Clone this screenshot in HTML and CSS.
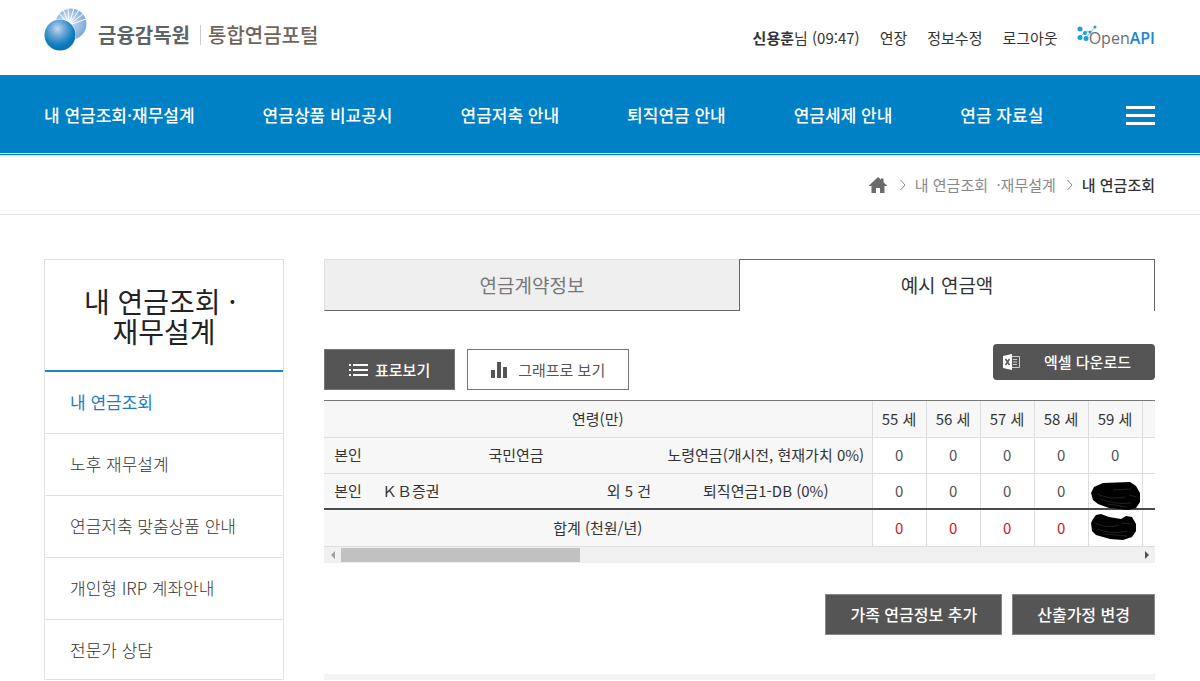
FILE: index.html
```html
<!DOCTYPE html>
<html lang="ko">
<head>
<meta charset="utf-8">
<title>통합연금포털 - 내 연금조회</title>
<meta name="viewport" content="width=device-width, initial-scale=1">
<link rel="stylesheet" href="styles.css">
</head>
<body>
<header class="top wrap">
  <a class="logo" href="#">
    <svg class="logo-mark" width="44" height="44" viewBox="0 0 44 44" aria-hidden="true">
      <defs>
        <radialGradient id="ball" cx="0.42" cy="0.3" r="0.7">
          <stop offset="0" stop-color="#c3d8ee"/><stop offset="0.35" stop-color="#6ba6d4"/><stop offset="0.75" stop-color="#0f7fbe"/><stop offset="1" stop-color="#0a6fae"/>
        </radialGradient>
        <radialGradient id="halo" cx="0.4" cy="0.45" r="0.62">
          <stop offset="0" stop-color="#fff"/><stop offset="0.4" stop-color="#b4cdea"/><stop offset="1" stop-color="#7aa7d8"/>
        </radialGradient>
      </defs>
      <circle cx="27" cy="16" r="15.500" fill="url(#halo)"/>
      <g stroke="#fff" stroke-width="1">
        <path d="M25 17 14 4M25 17 19 1M25 17 24 0M25 17 30 0M25 17 35 2M25 17 39 6M25 17 42 11"/>
      </g>
      <circle cx="16" cy="27" r="16" fill="#fff"/>
      <circle cx="16" cy="27" r="15.500" fill="url(#ball)"/>
    </svg>
    <strong class="logo-org">금융감독원</strong>
    <span class="logo-site">통합연금포털</span>
  </a>
  <ul class="util">
    <li><span><b>신용훈</b>님 (09:47)</span></li>
    <li><a href="#">연장</a></li>
    <li><a href="#">정보수정</a></li>
    <li><a href="#">로그아웃</a></li>
    <li><a class="api" href="#">
      <svg width="20" height="18" viewBox="0 0 20 18" aria-hidden="true">
        <g stroke="#7cc8ea" stroke-width="1"><path d="M3 12 9 6M9 13 18 2M9 6l4 1"/></g>
        <g fill="#1a9fdc"><circle cx="3" cy="4" r="2.500"/><circle cx="3" cy="12.500" r="2.500"/><circle cx="9" cy="13.500" r="2.500"/><circle cx="8" cy="8" r="2"/><circle cx="13" cy="7" r="1.500"/><circle cx="18" cy="2" r="1.500"/></g>
      </svg><span class="api-text">Open<b>API</b></span></a></li>
  </ul>
</header>

<nav class="gnb" aria-label="주 메뉴">
  <div class="wrap gnb-in">
    <a href="#">내 연금조회·재무설계</a>
    <a href="#">연금상품 비교공시</a>
    <a href="#">연금저축 안내</a>
    <a href="#">퇴직연금 안내</a>
    <a href="#">연금세제 안내</a>
    <a href="#">연금 자료실</a>
    <button class="menu" type="button" aria-label="전체메뉴"><i></i><i></i><i></i></button>
  </div>
</nav>

<div class="crumbs">
  <div class="wrap crumbs-in">
    <a href="#" class="home" aria-label="홈">
      <svg width="18" height="16" viewBox="0 0 18 16" aria-hidden="true"><path fill="#6b6b6b" d="M9 0l3 2.800V1.500h2.500v3.700L18 8.500V9h-2.500v7H11v-5H7v5H2.500V9H0v-.500z"/></svg>
    </a>
    <svg class="sep" width="6" height="12" viewBox="0 0 6 12" aria-hidden="true"><path d="M.500 1 5 6 .500 11" fill="none" stroke="#888"/></svg>
    <a href="#">내 연금조회&nbsp; ·재무설계</a>
    <svg class="sep" width="6" height="12" viewBox="0 0 6 12" aria-hidden="true"><path d="M.500 1 5 6 .500 11" fill="none" stroke="#888"/></svg>
    <strong>내 연금조회</strong>
  </div>
</div>

<div class="wrap body">
  <aside class="side">
    <h2>내 연금조회&nbsp;·&nbsp;<br>재무설계</h2>
    <ul>
      <li><a class="on" href="#">내 연금조회</a></li>
      <li><a href="#">노후 재무설계</a></li>
      <li><a href="#">연금저축 맞춤상품 안내</a></li>
      <li><a href="#">개인형 IRP 계좌안내</a></li>
      <li><a href="#">전문가 상담</a></li>
    </ul>
  </aside>

  <main class="main">
    <div class="tabs">
      <a href="#">연금계약정보</a>
      <a class="on" href="#">예시 연금액</a>
    </div>

    <div class="tools">
      <div class="views">
        <button class="btn dark" type="button">
          <svg width="19" height="12" viewBox="0 0 19 12" aria-hidden="true"><path fill="#fff" d="M0 0h2v2H0zM4 0h15v2H4zM0 5h2v2H0zM4 5h15v2H4zM0 10h2v2H0zM4 10h15v2H4z"/></svg>표로보기</button>
        <button class="btn light" type="button">
          <svg width="17" height="16" viewBox="0 0 17 16" aria-hidden="true"><path fill="#555" d="M0 8h4v8H0zM6 0h4v16H6zM12 5h4v11h-4z"/></svg>그래프로 보기</button>
      </div>
      <button class="excel" type="button">
        <svg width="17" height="16" viewBox="0 0 17 16" aria-hidden="true"><path fill="#fff" d="M0 2 9 0v16L0 14z"/><path fill="none" stroke="#ccc" d="M9 2.500h7.500v11H9M10 5.500h4M10 8h4M10 10.500h4"/><path d="M2.500 5 6.500 11M6.500 5 2.500 11" stroke="#555" stroke-width="1.500"/></svg>
        <span>엑셀 다운로드</span></button>
    </div>

    <div class="grid">
      <table>
        <colgroup><col class="c-who"><col class="c-org"><col class="c-cnt"><col class="c-type"><col class="c-age"><col class="c-age"><col class="c-age"><col class="c-age"><col class="c-age"><col class="c-age"></colgroup>
        <thead>
          <tr><th colspan="4" scope="col">연령(만)</th><th scope="col">55 세</th><th scope="col">56 세</th><th scope="col">57 세</th><th scope="col">58 세</th><th scope="col">59 세</th><th></th></tr>
        </thead>
        <tbody>
          <tr><th scope="row">본인</th><th colspan="2">국민연금</th><th>노령연금(개시전, 현재가치 0%)</th><td>0</td><td>0</td><td>0</td><td>0</td><td>0</td><td></td></tr>
          <tr><th scope="row">본인</th><th class="left">ＫＢ증권</th><th>외 5 건</th><th>퇴직연금1-DB (0%)</th><td>0</td><td>0</td><td>0</td><td>0</td>
            <td class="masked"><svg class="ink ink-a" width="50" height="28" viewBox="0 0 50 28" aria-hidden="true"><path d="M12 1 39 0l6 4 4 7v9l-4 6-8 2-19-2-11-4-5-4-2-7 3-6z"/><path d="M6 12q14 6 28 3M10 17q14 6 30 4M22 8l18-1M38 13l8 2M16 22l20 3" fill="none" stroke="#444" stroke-width=".500"/></svg></td><td></td></tr>
        </tbody>
        <tfoot>
          <tr><th colspan="4" scope="row">합계 (천원/년)</th><td>0</td><td>0</td><td>0</td><td>0</td>
            <td class="masked"><svg class="ink ink-b" width="46" height="26" viewBox="0 0 46 26" aria-hidden="true"><path d="m5 1 5-1 8 3 12 2 5-3 6 1 4 7v7l-4 6-9 3-13-1-14-4-4-4-1-8 2-4z"/><path d="M4 9q12 6 24 2M6 15q14 6 30 2M30 9l12 1M14 20l22 2" fill="none" stroke="#444" stroke-width=".500"/></svg></td><td></td></tr>
        </tfoot>
      </table>
    </div>
    <div class="scroll" aria-hidden="true">
      <svg width="17" height="16" viewBox="0 0 17 16"><path fill="#a0a0a0" d="M11 4v8L7 8z"/></svg>
      <div class="track"><div class="thumb"></div></div>
      <svg width="17" height="16" viewBox="0 0 17 16"><path fill="#505050" d="M7 4v8l4-4z"/></svg>
    </div>

    <div class="actions">
      <button type="button">가족 연금정보 추가</button>
      <button type="button">산출가정 변경</button>
    </div>
    <div class="note"></div>
  </main>
</div>
</body>
</html>
```
FILE: styles.css
```css
* { box-sizing: border-box; }
body {
  margin: 0;
  background: #fff;
  color: #333;
  font-family: "Noto Sans CJK KR", "Noto Sans", sans-serif;
  font-size: 15px;
  line-height: 20px;
}
a { color: inherit; text-decoration: none; }
ul { list-style: none; margin: 0; padding: 0; }
button { font: inherit; cursor: pointer; }
svg { display: block; flex: none; }
.wrap { padding: 0 45px 0 44px; }

.top { display: flex; justify-content: space-between; height: 75px; }
.logo { display: flex; align-items: center; padding-bottom: 5px; font-size: 20px; line-height: 20px; }
.logo-mark { margin-bottom: 10px; }
.logo-org { margin-left: 10px; color: #5d6468; }
.logo-site { margin-left: 10px; padding-left: 7px; border-left: 1px solid #ccc; color: #71645d; font-weight: 500; }
.util { display: flex; align-items: center; gap: 20px; padding-top: 1px; }
.util li:last-child { margin-left: -1px; }
.api { display: flex; align-items: center; color: #6d6e71; }
.api svg { margin: 0 -8px 8px 0; }
.api-text { font-family: "Open Sans", sans-serif; font-size: 16px; }
.api-text b { color: #1c86c8; font-weight: 600; }

.gnb { background: #0081c6; border-bottom: 3px double #cfe8f5; }
.gnb-in { display: flex; align-items: center; gap: 68px; height: 78px; padding-top: 2px; color: #fff; font-size: 17px; font-weight: 500; }
.menu { display: flex; flex-direction: column; gap: 5px; width: 29px; margin-left: auto; padding: 0; border: 0; background: none; }
.menu i { height: 3px; background: #fff; }

.crumbs { border-bottom: 1px solid #e5e5e5; }
.crumbs-in { display: flex; justify-content: flex-end; align-items: center; height: 58px; color: #888; }
.crumbs .home { margin-right: 13px; }
.crumbs .sep { margin-right: 9px; }
.crumbs a + .sep:not(:nth-child(2)) { margin-left: 11px; }
.crumbs strong { color: #333; font-weight: 500; }

.body { display: flex; align-items: flex-start; gap: 40px; padding-top: 44px; }
.side { width: 240px; flex: none; border: 1px solid #e1e1e1; }
.side h2 { margin: 0; padding: 26px 0 24px; border-bottom: 2px solid #1c86c0; color: #222; font-size: 28px; line-height: 30px; font-weight: 400; text-align: center; }
.side li + li { border-top: 1px solid #e1e1e1; }
.side li a { display: block; padding: 20px 25px 21px; font-size: 17px; font-weight: 300; }
.side li:last-child a { padding-bottom: 19px; }
.side li a.on { color: #1c7ec0; font-weight: 400; }

.main { flex: 1; min-width: 0; }
.tabs { display: flex; font-size: 19px; }
.tabs a { flex: 1; height: 52px; line-height: 50px; text-align: center; background: #efefef; border: 1px solid #e0e0e0; border-right: 0; border-bottom: 1px solid #666; color: #777; }
.tabs a.on { background: #fff; border: 1px solid #666; border-bottom: 0; color: #333; }

.tools { display: flex; justify-content: space-between; align-items: flex-start; padding: 33px 0 10px; }
.views { display: flex; gap: 12px; padding-top: 5px; }
.btn { display: flex; align-items: center; height: 41px; padding: 0 23px; border: 1px solid #777; }
.btn.dark { gap: 7px; padding: 0 24px; background: #555; color: #fff; font-weight: 500; }
.btn.light { gap: 10px; background: #fff; color: #555; }
.excel { display: flex; align-items: center; justify-content: space-between; width: 162px; height: 36px; padding: 0 24px 0 10px; border: 0; border-radius: 4px; background: #555; color: #fff; font-weight: 500; }

.grid { overflow: hidden; border-top: 1px solid #777; }
table { width: 872px; table-layout: fixed; border-collapse: collapse; }
.c-who { width: 48px; }
.c-org { width: 226px; }
.c-cnt { width: 62px; }
.c-type { width: 212px; }
.c-age { width: 54px; }
th, td { height: 36px; padding: 0; font-weight: 400; text-align: center; white-space: nowrap; border-bottom: 1px solid #ddd; }
th { background: #f7f7f7; }
td, thead th + th { border-left: 1px solid #ddd; }
td { color: #555; }
.left { padding-left: 10px; text-align: left; }
tfoot th, tfoot td { height: 37px; border-top: 2px solid #4a4a4a; }
tfoot td { color: #d7141f; }
.masked { position: relative; }
.ink { position: absolute; left: 2px; }
.ink-a { top: 8px; z-index: 1; }
.ink-b { top: 4px; }

.scroll { display: flex; height: 16px; background: #f0f0f0; }
.track { flex: 1; padding: 1px 0; }
.thumb { width: 30%; height: 14px; background: #c1c1c1; }

.actions { display: flex; justify-content: flex-end; gap: 10px; padding-top: 31px; }
.actions button { height: 41px; padding: 0 24px; border: 1px solid #888; background: #555; color: #fff; font-size: 16px; font-weight: 500; }
.note { height: 6px; margin-top: 39px; background: #f4f4f4; }
```
